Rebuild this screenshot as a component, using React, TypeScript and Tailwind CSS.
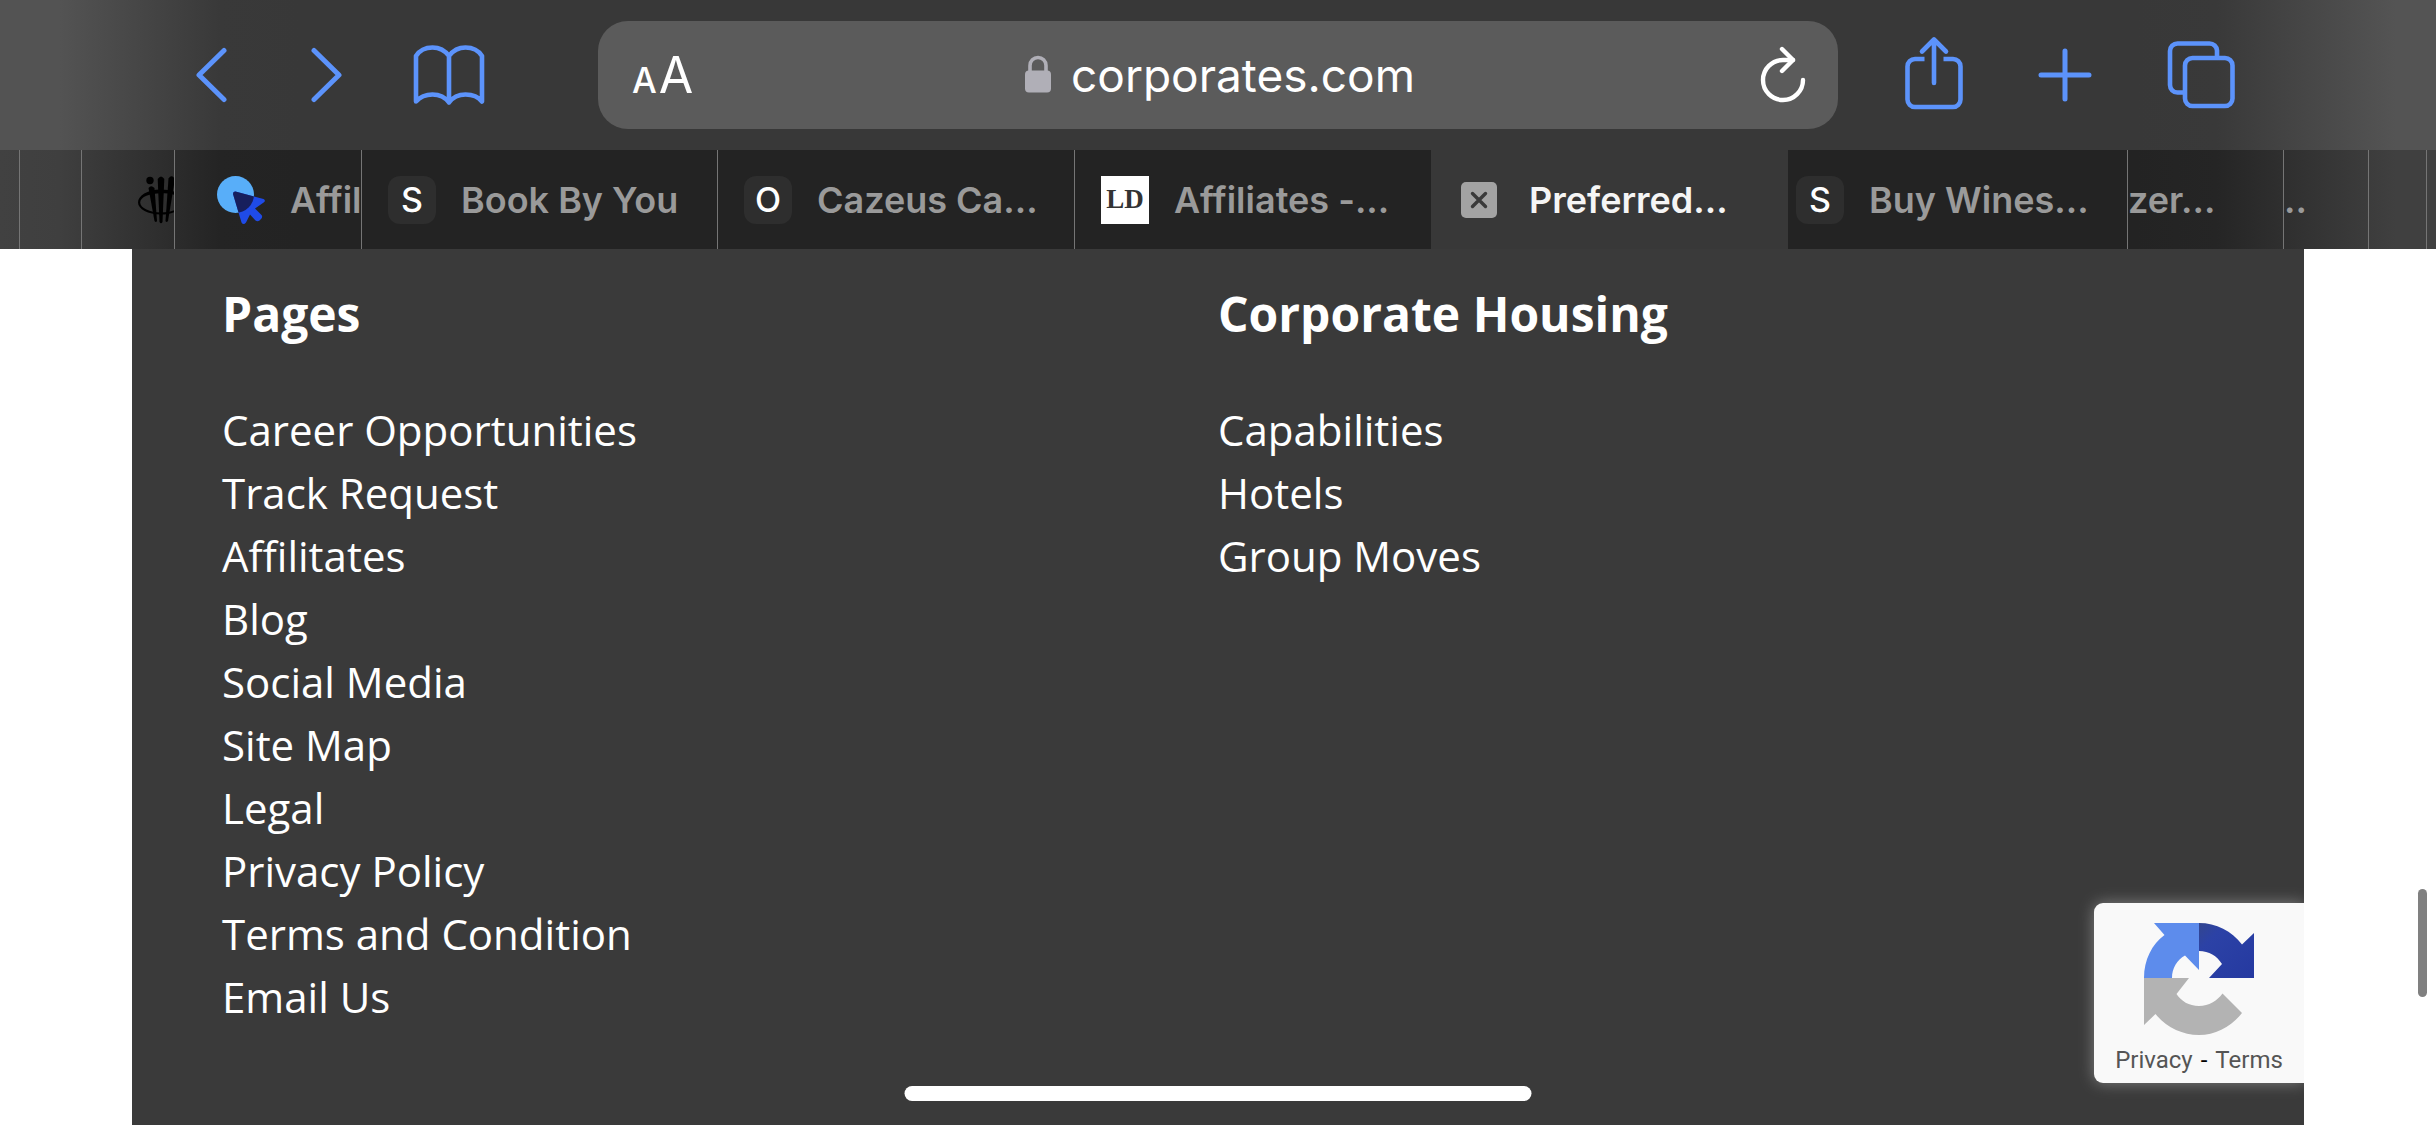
import React from "react";

const sans = "font-['Inter',sans-serif]";

function BackIcon() {
  return (
    <svg width="32" height="56" viewBox="0 0 32 56" fill="none" stroke="currentColor" strokeWidth="5" strokeLinecap="round" strokeLinejoin="round">
      <path d="M29 3.500 4 28l25 24.500" />
    </svg>
  );
}

function ForwardIcon() {
  return (
    <svg width="32" height="56" viewBox="0 0 32 56" fill="none" stroke="currentColor" strokeWidth="5" strokeLinecap="round" strokeLinejoin="round">
      <path d="M3 3.500 28 28 3 52.500" />
    </svg>
  );
}

function BookIcon() {
  return (
    <svg width="72" height="60" viewBox="0 0 72 60" fill="none" stroke="currentColor" strokeWidth="4.600" strokeLinecap="round" strokeLinejoin="round">
      <path d="M36 11v46.500M36 11C32 5.500 26 2.500 19.500 2.500S6.500 5.500 3 11v45.500c4-4.500 10-7 16.500-7S32 52 36 57.500c4-5.500 10-8 16.500-8S65.500 52 69 56.500V11C65.500 5.500 59.500 2.500 52.500 2.500S40 5.500 36 11Z" />
    </svg>
  );
}

function ShareIcon() {
  return (
    <svg width="58" height="78" viewBox="0 0 58 78" fill="none" stroke="currentColor" strokeWidth="4.600" strokeLinejoin="round">
      <path d="M19.500 23H10a7.500 7.500 0 0 0-7.500 7.500v33A7.500 7.500 0 0 0 10 71h38a7.500 7.500 0 0 0 7.500-7.500v-33A7.500 7.500 0 0 0 48 23h-9.500" />
      <path strokeLinecap="round" d="M29 47V3.500M17 15.500 29 3.500l12 12" />
    </svg>
  );
}

function PlusIcon() {
  return (
    <svg width="54" height="54" viewBox="0 0 54 54" fill="none" stroke="currentColor" strokeWidth="5" strokeLinecap="round">
      <path d="M27 3v48M3 27h48" />
    </svg>
  );
}

function TabsIcon() {
  return (
    <svg width="68" height="68" viewBox="0 0 68 68" fill="none" stroke="currentColor" strokeWidth="4.600">
      <path d="M50 17V9.500A7.500 7.500 0 0 0 42.500 2.500h-32A7.500 7.500 0 0 0 3 10v34a7.500 7.500 0 0 0 7.500 7.500H18" />
      <rect x="18" y="17" width="47.500" height="48" rx="7.500" />
    </svg>
  );
}

function LockIcon() {
  return (
    <svg width="26" height="40" viewBox="0 0 26 40" fill="none">
      <rect x="0" y="15.500" width="26" height="22" rx="4" fill="#b0afb7" />
      <path d="M5 17V10.500a8 8 0 0 1 16 0V17" stroke="#b0afb7" strokeWidth="3.600" />
    </svg>
  );
}

function ReloadIcon() {
  return (
    <svg width="46" height="58" viewBox="0 0 46 58" fill="none" stroke="currentColor" strokeWidth="4.400" strokeLinecap="round" strokeLinejoin="round">
      <path d="M43 34A20 20 0 1 1 23 14H33" />
      <path d="M22 3 33 14 22 25" />
    </svg>
  );
}

function ForkIcon() {
  return (
    <svg className="shrink-0" width="48" height="48" viewBox="0 0 48 48" fill="#000">
      <circle cx="12" cy="4.500" r="3.700" />
      <path d="M10.500 12q2.500-3.500 6 0L19 45q-1 2-2.500 0Z" />
      <path d="M19.700 3q3.300-5 6.600 0l-1.800 43q-1.500 2.500-3 0Z" />
      <path d="M30.500 2.500q3-4.500 6.500 .500L30 45q-1.500 2-2.500 0Z" />
      <path fillRule="evenodd" d="M23 13.500c13 0 22.500 5 22.500 12S36 38.500 23 38.500 0 33 0 26.500s9-13 23-13Zm0 3.800C12 17.300 2.200 21 2.200 26.500S12 36.500 23 36.500s20.500-4 20.500-10.500S34 17.300 23 17.300Z" />
    </svg>
  );
}

function CursorIcon() {
  const pointer = "M18.500 15.600 46.500 23q2.500 1.500 .500 3.300L38 32.500l6.500 6.500q1.500 2-.500 4l-1.500 1.500q-2 1.500-4 0L33 38.500l-4 8q-2.500 3-4.500 0L16 18q0-2.500 2.500-2.400Z";
  return (
    <svg className="shrink-0" width="48" height="48" viewBox="0 0 48 48">
      <defs>
        <clipPath id="cursor-disc">
          <circle cx="18.500" cy="18.500" r="18.500" />
        </clipPath>
      </defs>
      <circle cx="18.500" cy="18.500" r="18.500" fill="#58aef9" />
      <path d={pointer} fill="#1f4be8" />
      <path d={pointer} fill="#171f5c" clipPath="url(#cursor-disc)" />
    </svg>
  );
}

function LetterIcon({ letter }: { letter: string }) {
  return (
    <span className="flex size-12 shrink-0 items-center justify-center rounded-xl bg-[#2e2e2e] text-[34px] leading-none font-medium text-white">
      {letter}
    </span>
  );
}

function LdIcon() {
  return (
    <span className="flex size-12 shrink-0 items-center justify-center bg-white font-['Liberation_Serif',serif] text-[27px] leading-none font-bold text-[#333]">
      LD
    </span>
  );
}

function CloseIcon() {
  return (
    <svg className="shrink-0" width="36" height="36" viewBox="0 0 36 36">
      <rect width="36" height="36" rx="5" fill="#a3a3a3" />
      <path d="M11.500 11.500l13 13m0-13-13 13" stroke="#3a3a3a" strokeWidth="3.400" strokeLinecap="round" />
    </svg>
  );
}

function RecaptchaLogo() {
  return (
    <svg width="110" height="112" viewBox="0 0 110 112">
      <defs>
        <linearGradient id="navy" x1="0" y1="0" x2="1" y2="1">
          <stop offset="0" stopColor="#33468f" />
          <stop offset="0.250" stopColor="#2c42a6" />
          <stop offset="1" stopColor="#2539a0" />
        </linearGradient>
      </defs>
      <path d="M10 0H55V47L41 32.500C33 37 28 45 28 55H0C0 37 8 21 20.500 12Z" fill="#5d8cec" />
      <path d="M55 0C72 0 88 8 98 21.500L110 10V55H65L78 41C73 33 65 28 55 28Z" fill="url(#navy)" />
      <path d="M0 55H45L32.500 71C37 78 45 83 55 83S73 78 78.500 70.500L98 90C88 103 72 112 55 112S22 104 11.500 91L0 102Z" fill="#b3b3b3" />
    </svg>
  );
}

type Tab = { title?: string; icon?: React.ReactNode; box: string; active?: boolean };

const line = "border-r border-[#757575]";

const tabs: Tab[] = [
  { box: line },
  { box: line },
  { icon: <ForkIcon />, box: `pl-14 ${line}` },
  { icon: <CursorIcon />, title: "Affil", box: `pl-[42px] ${line}` },
  { icon: <LetterIcon letter="S" />, title: "Book By You", box: `pl-[26px] ${line}` },
  { icon: <LetterIcon letter="O" />, title: "Cazeus Ca...", box: `pl-[26px] ${line}` },
  { icon: <LdIcon />, title: "Affiliates -...", box: "pl-[26px]" },
  { icon: <CloseIcon />, title: "Preferred...", box: "pl-[30px] bg-[#383838]", active: true },
  { icon: <LetterIcon letter="S" />, title: "Buy Wines...", box: `pl-2 ${line}` },
  { title: "zer...", box: line },
  { title: "..", box: line },
  { box: line },
  { box: "" },
];

const footer = [
  {
    heading: "Pages",
    links: ["Career Opportunities", "Track Request", "Affilitates", "Blog", "Social Media", "Site Map", "Legal", "Privacy Policy", "Terms and Condition", "Email Us"],
  },
  { heading: "Corporate Housing", links: ["Capabilities", "Hotels", "Group Moves"] },
];

function Toolbar() {
  return (
    <div className="flex items-center bg-[linear-gradient(to_right,#535353_0,#535353_60px,#393939_220px,#383838_300px,#383838_calc(100%-300px),#393939_calc(100%-220px),#545454_calc(100%-40px))] pt-[21px] pr-[201px] pb-[21px] pl-[195px] text-[#5c93fb]">
      <button aria-label="Back"><BackIcon /></button>
      <button aria-label="Forward" className="ml-[84px]"><ForwardIcon /></button>
      <button aria-label="Bookmarks" className="ml-[70px]"><BookIcon /></button>
      <div className="mr-[67px] ml-[113px] flex h-[108px] flex-1 items-center justify-between rounded-[30px] bg-[#5b5b5b] px-8 text-white">
        <button aria-label="Page settings" className="flex w-16 items-baseline gap-0.5 pl-0.5 leading-none">
          <span className="text-[35px] font-medium">A</span>
          <span className="text-[50px]">A</span>
        </button>
        <div className="flex items-center gap-5 pl-1">
          <LockIcon />
          <input aria-label="Address" defaultValue="corporates.com" className="field-sizing-content bg-transparent text-[46px] leading-[60px] outline-none" />
        </div>
        <button aria-label="Reload" className="flex w-16 justify-end"><ReloadIcon /></button>
      </div>
      <button aria-label="Share"><ShareIcon /></button>
      <button aria-label="New tab" className="ml-[75px]"><PlusIcon /></button>
      <button aria-label="Show tabs" className="ml-[75px]"><TabsIcon /></button>
    </div>
  );
}

function TabStrip() {
  return (
    <div
      role="tablist"
      className="grid h-[99px] grid-cols-[minmax(0,20fr)_minmax(0,62fr)_minmax(0,93fr)_minmax(0,187fr)_minmax(0,356fr)_minmax(0,357fr)_minmax(0,356fr)_minmax(0,357fr)_minmax(0,340fr)_minmax(0,156fr)_minmax(0,85fr)_minmax(0,58fr)_minmax(0,9fr)] bg-[linear-gradient(to_right,#414141_0,#3f3f3f_60px,#242424_220px,#232323_300px,#232323_calc(100%-300px),#252525_calc(100%-220px),#404040_calc(100%-40px))]"
    >
      {tabs.map((tab, i) => (
        <button
          key={i}
          role="tab"
          aria-selected={!!tab.active}
          aria-label={tab.title ?? "Tab"}
          className={`flex items-center overflow-hidden text-left text-[36px] leading-[44px] font-semibold whitespace-nowrap ${tab.active ? "gap-8 text-[#f5f5f5]" : "gap-[25px] text-[#9a9a9a]"} ${tab.box}`}
        >
          {tab.icon}
          {tab.title && <span>{tab.title}</span>}
        </button>
      ))}
    </div>
  );
}

export default function App() {
  return (
    <div className={`relative flex min-h-screen flex-col bg-white ${sans}`}>
      <header>
        <Toolbar />
        <TabStrip />
      </header>

      <main className="relative mx-[132px] grid flex-1 grid-cols-2 content-start overflow-hidden bg-[#3a3a3a] px-[90px] pt-[29px] pb-14 font-['Open_Sans',sans-serif] text-white">
        {footer.map((group) => (
          <nav key={group.heading} aria-label={group.heading}>
            <h2 className="mb-12 text-[48px] leading-[72px] font-bold">{group.heading}</h2>
            <ul className="text-[42px] leading-[63px]">
              {group.links.map((label) => (
                <li key={label}><a href="#">{label}</a></li>
              ))}
            </ul>
          </nav>
        ))}

        <aside className="absolute right-0 bottom-[42px] flex h-[180px] w-[210px] flex-col items-center rounded-l-[9px] bg-[#f9f9f9] pt-5 font-['Roboto',sans-serif] text-[24px] text-[#555] shadow-[0_0_15px_#808080]">
          <RecaptchaLogo />
          <p className="mt-[11px] flex gap-2 leading-7">
            <a href="#">Privacy</a>
            <span className="text-black">-</span>
            <a href="#">Terms</a>
          </p>
        </aside>
      </main>

      <div className="absolute bottom-6 left-1/2 h-[15px] w-[627px] -translate-x-1/2 rounded-full bg-white" />
      <div className="absolute right-[9px] bottom-32 h-[108px] w-[9px] rounded-full bg-[#808080]" />
    </div>
  );
}
